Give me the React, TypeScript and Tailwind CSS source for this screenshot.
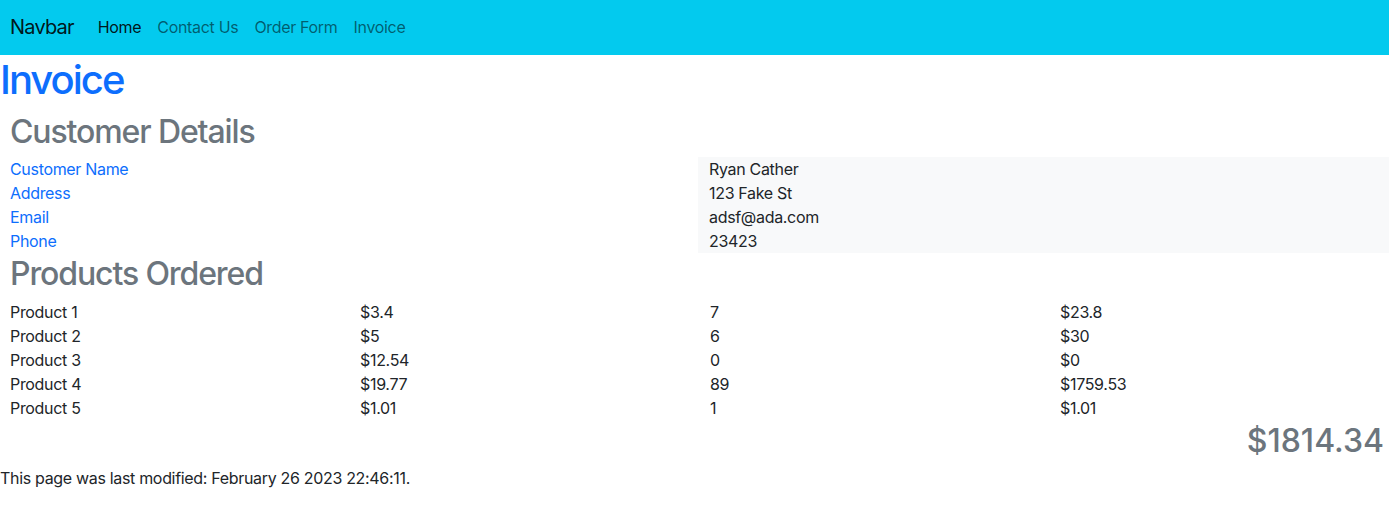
import React from 'react';

const customer = [
  ['Customer Name', 'Ryan Cather'],
  ['Address', '123 Fake St'],
  ['Email', 'adsf@ada.com'],
  ['Phone', '23423'],
];

const products = [
  ['Product 1', '$3.4', '7', '$23.8'],
  ['Product 2', '$5', '6', '$30'],
  ['Product 3', '$12.54', '0', '$0'],
  ['Product 4', '$19.77', '89', '$1759.53'],
  ['Product 5', '$1.01', '1', '$1.01'],
];

export default function App() {
  return (
    <div className="min-h-screen bg-white text-[#212529] font-['Inter',sans-serif] text-base leading-6 tracking-[-0.02em]">
      {/* Navbar */}
      <nav className="h-[55px] bg-[#03caee] flex items-center px-[10px] pb-[2px]">
        <span className="text-[20px] text-black/90 mr-4 tracking-[-0.04em]">Navbar</span>
        <div className="flex items-center">
          <a className="px-2 text-black/90">Home</a>
          <a className="px-2 text-black/55">Contact Us</a>
          <a className="px-2 text-black/55">Order Form</a>
          <a className="px-2 text-black/55">Invoice</a>
        </div>
      </nav>

      <h1 className="text-[40px] leading-[48px] font-medium text-[#0d6efd] pt-px mb-[7px] tracking-[-0.05em]">Invoice</h1>

      <div>
        <h2 className="text-[32px] leading-[38px] font-medium text-[#6c757d] pl-[10px] pt-[2px] mb-[6px] tracking-[-0.035em]">Customer Details</h2>
        <div className="grid grid-cols-[698px_1fr]">
          <div className="pl-[10px]">
            {customer.map(([label]) => (
              <div key={label} className="text-[#0d6efd] h-6">{label}</div>
            ))}
          </div>
          <div className="bg-[#f8f9fa] pl-[11px]">
            {customer.map(([label, value]) => (
              <div key={label} className="h-6">{value}</div>
            ))}
          </div>
        </div>

        <h2 className="text-[32px] leading-[38px] font-medium text-[#6c757d] pl-[10px] pt-[2px] mb-[6px] tracking-[-0.035em]">Products Ordered</h2>
        <div className="pl-[10px]">
          {products.map((row) => (
            <div key={row[0]} className="grid grid-cols-[350px_350px_350px_1fr] h-6 pt-px">
              {row.map((cell, i) => (
                <div key={i}>{cell}</div>
              ))}
            </div>
          ))}
        </div>

        <div className="text-right pr-[5px] mt-[2px] pt-px text-[32px] leading-[38px] font-medium text-[#6c757d] mb-[6px] tracking-normal">$1814.34</div>
      </div>

      <p>This page was last modified: February 26 2023 22:46:11.</p>
    </div>
  );
}
